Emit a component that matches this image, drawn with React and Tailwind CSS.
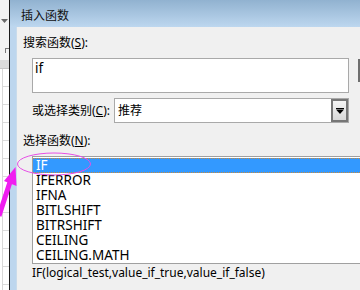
import React from 'react';

const FUNCS = ['IF', 'IFERROR', 'IFNA', 'BITLSHIFT', 'BITRSHIFT', 'CEILING', 'CEILING.MATH'];

const UI_FONT = "font-['Noto_Sans','Noto_Sans_CJK_SC',sans-serif]";

function SheetStrip() {
  return (
    <div className="w-[9px] h-full flex flex-col bg-white">
      <div className="h-[60px] bg-[#f3f3f3] flex flex-col pl-[1px]">
        <div className="h-[19px]" />
        <svg width="7" height="4" viewBox="0 0 7 4"><path d="M0 0h7L3.5 4z" fill="#6b6b6b" /></svg>
        <div className="h-[25px]" />
        <div className="ml-[4px] w-[4px] h-[5px] border-l border-t border-[#7a7a7a]" />
      </div>
      <div className="h-[9px] bg-[#dcdcdc] border-b border-[#c6c6c6]" />
      <div className="flex-1 border-l border-[#d8d8d8] ml-[2px] flex flex-col">
        {Array.from({ length: 12 }).map((_, i) => (
          <div key={i} className="h-[18px] border-b border-[#dadada]" />
        ))}
      </div>
    </div>
  );
}

function ComboArrow() {
  return (
    <div className="w-[17px] h-full border-2 border-[#767676] bg-[linear-gradient(#f4f4f4,#d8d8d8)] flex items-center justify-center">
      <svg width="8" height="6" viewBox="0 0 8 6">
        <rect x="0" y="0" width="8" height="1" fill="#000" />
        <path d="M0 1.5h8L4 6z" fill="#000" />
      </svg>
    </div>
  );
}

export default function App() {
  return (
    <div className={`relative w-[360px] h-[290px] overflow-hidden flex ${UI_FONT} text-[12px] text-black`}>
      <SheetStrip />
      <div className="w-px h-full bg-[#1c1c1c]" />
      <div className="flex-1 flex flex-col min-w-0">
        <div className="h-[27px] shrink-0 bg-[linear-gradient(#91b2d0,#bdd7ef)] pl-[11px] pt-[4px] flex items-center">
          <span className="text-[12px] text-[#111]">插入函数</span>
        </div>
        <div className="flex-1 flex min-h-0">
          <div className="w-[7px] bg-[#bdd6ee] border-r border-[#c9dbeb]" />
          <div className="flex-1 bg-[#f0f0f0] flex flex-col min-w-0">
            <div className="pl-[6px] pt-[7px] leading-[17px]">
              搜索函数(<span className="underline">S</span>):
            </div>
            <div className="mt-[7px] flex items-start justify-between">
              <div className="ml-[15px] w-[317px] h-[35px] bg-white border border-[#a9a9a9] px-[2px] pt-[1px] leading-[16px] text-[13.5px]">
                if
              </div>
              <div className="w-[2px] h-[23px] mt-[1px] bg-[#6e6e6e]" />
            </div>
            <div className="mt-[5px] flex items-center h-[25px]">
              <div className="ml-[15px] w-[82px] leading-[17px]">
                或选择类别(<span className="underline">C</span>):
              </div>
              <div className="w-[235px] h-[25px] bg-white border border-[#a9a9a9] flex items-center justify-between">
                <span className="pl-[3px]">推荐</span>
                <ComboArrow />
              </div>
            </div>
            <div className="pl-[6px] mt-[9px] leading-[17px]">
              选择函数(<span className="underline">N</span>):
            </div>
            <div className="mt-[7px] ml-[15px] w-[340px] h-[108px] bg-white border border-[#a0a0a0] border-r-0 pt-px text-[13.5px]">
              {FUNCS.map((f, i) =>
                i === 0 ? (
                  <div key={f} className="h-[15px] leading-[13px] bg-[#3399ff] text-white border-y border-dotted border-[#c98a3a] pl-[3px]">
                    {f}
                  </div>
                ) : (
                  <div key={f} className="h-[15px] leading-[15px] pl-[3px]">
                    {f}
                  </div>
                )
              )}
            </div>
            <div className="pl-[15px] leading-[16px] mt-px">
              IF(logical_test,value_if_true,value_if_false)
            </div>
          </div>
        </div>
      </div>
      <svg className="absolute inset-0 pointer-events-none" width="360" height="290" viewBox="0 0 360 290">
        <ellipse cx="54" cy="164" rx="36.5" ry="11" fill="none" stroke="#e64fe6" strokeWidth="1" />
        <path d="M-1 216 L10 182" stroke="#f01ef0" strokeWidth="5" />
        <path d="M15.5 167 L4 181 L16.5 186 Z" fill="#f01ef0" />
      </svg>
    </div>
  );
}
